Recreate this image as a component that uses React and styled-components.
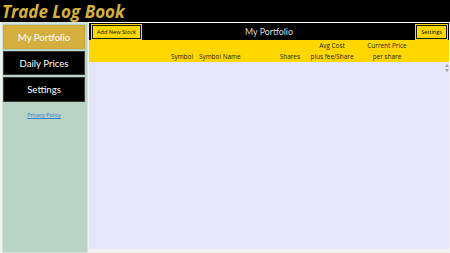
import React from "react";
import styled, { createGlobalStyle } from "styled-components";

const GlobalStyle = createGlobalStyle`
  html, body {
    margin: 0;
    padding: 0;
    background: #f2f2f2;
  }
  body {
    font-family: "Open Sans", "Noto Sans", sans-serif;
  }
`;

const Page = styled.div`
  width: 450px;
  height: 253px;
  display: flex;
  flex-direction: column;
  overflow: hidden;
  background: #f2f2f2;
`;

const TopBar = styled.div`
  height: 22px;
  background: #000;
  display: flex;
  align-items: center;
  padding-left: 2px;
`;

const Title = styled.h1`
  margin: 0;
  font-size: 17px;
  font-weight: 700;
  font-style: italic;
  color: #d6b23c;
`;

const Main = styled.div`
  flex: 1;
  display: flex;
  padding: 0 1px 0 2px;
  gap: 1px;
  min-height: 0;
`;

const Sidebar = styled.nav`
  width: 86px;
  box-sizing: border-box;
  background: #b9d4c4;
  border: 1px solid #d2e3d9;
  border-top-width: 2px;
  padding: 1px 2px 0 0;
  display: flex;
  flex-direction: column;
  gap: 2px;
`;

const NavButton = styled.div`
  height: ${(p) => p.$h}px;
  background: ${(p) => (p.$active ? "#d4af3e" : "#000")};
  border: 1px solid ${(p) => (p.$active ? "#c9a63a" : "#3a3a3a")};
  color: #fff;
  font-family: Lato, "Open Sans", sans-serif;
  font-size: 9.6px;
  display: flex;
  align-items: center;
  justify-content: center;
  box-sizing: border-box;
`;

const PrivacyLink = styled.a`
  margin-top: 7px;
  align-self: center;
  font-size: 5.4px;
  color: #2a7fd6;
  text-decoration: underline;
  cursor: pointer;
`;

const Content = styled.section`
  flex: 1;
  display: flex;
  flex-direction: column;
  border-top: 1px solid #fff;
  margin-bottom: 4px;
  background: #e6e6fa;
`;

const Header = styled.div`
  height: 17px;
  background: #000;
  display: flex;
  align-items: center;
  justify-content: space-between;
  padding: 0 2px 0 3px;
  position: relative;
`;

const SmallButton = styled.button`
  height: 14px;
  padding: 0 4px;
  background: #ffd700;
  border: 1.5px solid #1a1a1a;
  outline: 1px solid #ffd700;
  font-family: inherit;
  font-size: 5.6px;
  color: #000;
  display: flex;
  align-items: center;
`;

const HeaderTitle = styled.div`
  position: absolute;
  left: 0;
  right: 0;
  text-align: center;
  color: #dcdcdc;
  font-family: Lato, "Open Sans", sans-serif;
  font-size: 8.8px;
  pointer-events: none;
`;

const Columns = styled.div`
  height: 22px;
  background: #ffd700;
  display: grid;
  grid-template-columns: 74px 30px 65px 42px 64px 46px 1fr;
  grid-template-rows: 11px 11px;
  font-size: 6.4px;
  color: #222;
  line-height: 11px;
`;

const Cell = styled.div`
  grid-column: ${(p) => p.$col};
  grid-row: ${(p) => p.$row};
  text-align: ${(p) => p.$align || "left"};
  padding: ${(p) => p.$pad || "0"};
  white-space: nowrap;
`;

const Body = styled.div`
  flex: 1;
  position: relative;
`;

const ScrollArrows = styled.div`
  position: absolute;
  top: 2px;
  right: 0;
  display: flex;
  flex-direction: column;
  gap: 2px;
`;

export default function App() {
  return (
    <Page>
      <GlobalStyle />
      <TopBar>
        <Title>Trade Log Book</Title>
      </TopBar>
      <Main>
        <Sidebar>
          <NavButton $active $h={24}>My Portfolio</NavButton>
          <NavButton $h={24}>Daily Prices</NavButton>
          <NavButton $h={25}>Settings</NavButton>
          <PrivacyLink>Privacy Policy</PrivacyLink>
        </Sidebar>
        <Content>
          <Header>
            <SmallButton>Add New Stock</SmallButton>
            <HeaderTitle>My Portfolio</HeaderTitle>
            <SmallButton>Settings</SmallButton>
          </Header>
          <Columns>
            <Cell $col={5} $row={1} $align="center">Avg Cost</Cell>
            <Cell $col={6} $row={1} $align="center">Current Price</Cell>
            <Cell $col={2} $row={2} $align="right">Symbol</Cell>
            <Cell $col={3} $row={2} $pad="0 0 0 6px">Symbol Name</Cell>
            <Cell $col={4} $row={2} $align="right">Shares</Cell>
            <Cell $col={5} $row={2} $align="center">plus fee/Share</Cell>
            <Cell $col={6} $row={2} $align="center">per share</Cell>
          </Columns>
          <Body>
            <ScrollArrows>
              <svg width="4" height="3" viewBox="0 0 4 3">
                <path d="M0 3 L2 0 L4 3 Z" fill="#a0a0a0" />
              </svg>
              <svg width="4" height="3" viewBox="0 0 4 3">
                <path d="M0 0 L2 3 L4 0 Z" fill="#a0a0a0" />
              </svg>
            </ScrollArrows>
          </Body>
        </Content>
      </Main>
    </Page>
  );
}
